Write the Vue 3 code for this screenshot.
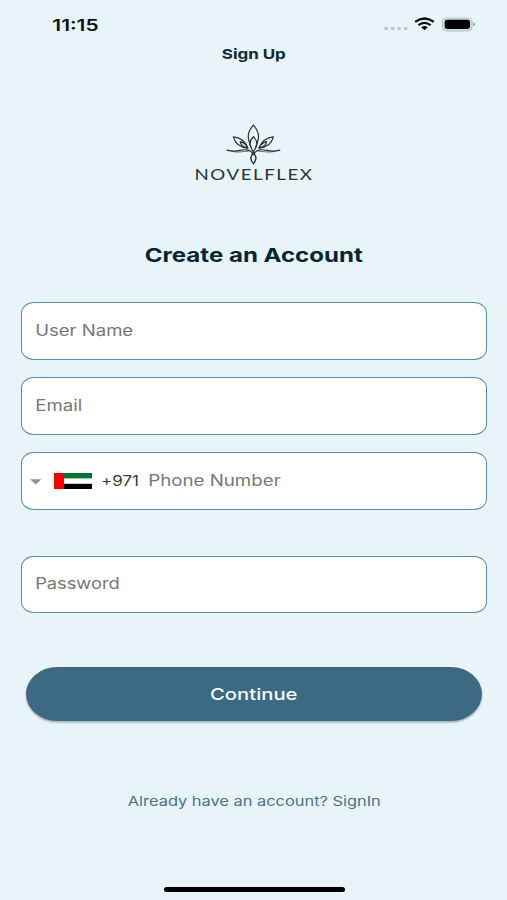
<script setup>
const fields = [
  { id: 'name', label: 'User Name', width: 98 },
  { id: 'email', label: 'Email', width: 47 },
  { id: 'phone', label: 'Phone Number', width: 132.5, phone: true },
  { id: 'password', label: 'Password', width: 84.5 },
]
</script>

<template>
  <main class="screen">
    <header class="status">
      <svg class="time" width="50" height="24" viewBox="0 0 50 24">
        <text x="0.3" y="18.6" textLength="46.3" lengthAdjust="spacingAndGlyphs">11:15</text>
      </svg>
      <svg class="indicators" width="94" height="18" viewBox="0 0 94 18">
        <g fill="#bcc6c9">
          <rect x="1.2" y="12.1" width="4" height="3" rx="1.4" />
          <rect x="7.7" y="12.1" width="4" height="3" rx="1.4" />
          <rect x="14.1" y="12.1" width="4" height="3" rx="1.4" />
          <rect x="20.5" y="12.1" width="4" height="3" rx="1.4" />
        </g>
        <g fill="none" stroke="#080b0c" stroke-width="2.3">
          <path d="M32.2 6.9Q41.5 .2 50.8 6.9" />
          <path d="M35.4 10.2Q41.5 5.6 47.6 10.2" />
        </g>
        <path d="M38.2 12.3Q41.5 9.8 44.8 12.3L41.5 15.3Z" fill="#080b0c" />
        <rect x="59.5" y="3" width="29.5" height="12.8" rx="4" fill="#d3dbdd" stroke="#bdc6c9" stroke-width="1.2" />
        <rect x="61.7" y="4.8" width="25.3" height="9.2" rx="2.4" fill="#000" />
        <path d="M90.3 7.3Q94 9.3 90.3 11.3Z" fill="#929a9d" />
      </svg>
    </header>

    <svg class="title" width="65" height="18" viewBox="0 0 65 18">
      <text x="0.8" y="13.4" textLength="64" lengthAdjust="spacingAndGlyphs">Sign Up</text>
    </svg>

    <svg class="logo" width="120" height="60" viewBox="0 0 120 60">
      <g fill="none" stroke="#26343a" stroke-width="1.2" stroke-linejoin="round" stroke-linecap="round">
        <path d="M59.4 1.2C55.3 5.8 53.4 10.3 54.6 15.5L56.8 23M59.4 1.2C63.5 5.8 65.4 10.3 64.2 15.5L62 23" />
        <path d="M59.4 12.7C54.9 17 54.9 20.8 59.4 28C63.9 20.8 63.9 17 59.4 12.7Z" />
        <path d="M54 24.2C46 23.4 41 19 39.4 12.8C46 13.4 51.3 17.4 54 24.2Z" />
        <path d="M64.8 24.2C72.8 23.4 77.8 19 79.4 12.8C72.8 13.4 67.5 17.4 64.8 24.2Z" />
        <path d="M53.5 23.8C49.2 23 46.6 20.8 46.2 17.6C49.6 18.2 52 20.2 53.5 23.8Z" />
        <path d="M65.3 23.8C69.6 23 72.2 20.8 72.6 17.6C69.2 18.2 66.8 20.2 65.3 23.8Z" />
        <path d="M33 26.1C43 29.2 46 25.1 52.5 25.8C57 26.3 58.3 28.3 59.4 30.6C60.5 28.3 61.8 26.3 66.3 25.8C72.8 25.1 75.8 29.2 85.8 26.1" />
        <path d="M38 27.4C46 29 49 27 54 27.3M80.8 27.4C72.8 29 69.8 27 64.8 27.3" stroke-width=".7" />
        <path d="M59.4 28.3C57 32 55.2 35.2 59.4 39.6C63.6 35.2 61.8 32 59.4 28.3Z" stroke-width="1.5" />
      </g>
      <text x="0.5" y="55.6" textLength="119" lengthAdjust="spacingAndGlyphs">NOVELFLEX</text>
    </svg>

    <svg class="heading" width="219" height="26" viewBox="0 0 219 26">
      <text x="0.8" y="19.7" textLength="218" lengthAdjust="spacingAndGlyphs">Create an Account</text>
    </svg>

    <form class="form">
      <div v-for="field in fields" :key="field.id" class="field" :class="field.id">
        <div v-if="field.phone" class="country">
          <svg class="caret" width="12" height="6" viewBox="0 0 12 6"><path d="M0 .3H11.5L5.7 5.4Z" fill="#909090" /></svg>
          <svg class="flag" width="38" height="16" viewBox="0 0 38 16">
            <rect width="38" height="16" fill="#fff" />
            <rect width="38" height="5.4" fill="#00732f" />
            <rect y="10.8" width="38" height="5.2" fill="#000" />
            <rect width="10" height="16" fill="#f00" />
          </svg>
          <svg class="code" width="39" height="24" viewBox="0 0 39 24">
            <text x="0" y="18.2" textLength="38" lengthAdjust="spacingAndGlyphs">+971</text>
          </svg>
        </div>
        <svg class="label" :width="field.width + 3" height="24">
          <text x="0.2" y="17.9" :textLength="field.width" lengthAdjust="spacingAndGlyphs">{{ field.label }}</text>
        </svg>
      </div>
      <button class="submit" type="button">
        <svg width="88" height="24" viewBox="0 0 88 24">
          <text x="0" y="17.5" textLength="87.5" lengthAdjust="spacingAndGlyphs">Continue</text>
        </svg>
      </button>
    </form>

    <svg class="signin" width="254" height="20" viewBox="0 0 254 20">
      <text x="0.8" y="14.8" textLength="253" lengthAdjust="spacingAndGlyphs">Already have an account? SignIn</text>
    </svg>
    <div class="home"></div>
  </main>
</template>

<style>
body { background: #e8f4f7; }
</style>

<style scoped>
.screen {
  box-sizing: border-box;
  width: 507px;
  height: 900px;
  display: flex;
  flex-direction: column;
  align-items: center;
  background: #e8f4f7;
  font-family: Inter, "Liberation Sans", sans-serif;
  overflow: hidden;
}
svg { display: block; flex: none; overflow: visible; }
.status {
  box-sizing: border-box;
  width: 100%;
  height: 46px;
  padding: 12px 30px 0 52px;
  display: flex;
  justify-content: space-between;
  align-items: flex-start;
}
.indicators { margin-top: 3px; }
.time text { font-size: 16px; font-weight: 600; fill: #0b1519; }
.title text { font-size: 13.2px; font-weight: 650; fill: #0c2937; }
.logo { margin-top: 60px; }
.logo text { font-family: Lato, "Liberation Sans", sans-serif; font-size: 15.6px; letter-spacing: 1.3px; fill: #26343a; }
.heading { margin-top: 58px; }
.heading text { font-size: 19.3px; font-weight: 650; fill: #062532; }
.form { width: 466px; margin-top: 34px; }
.field {
  box-sizing: border-box;
  height: 57.5px;
  margin-bottom: 17.7px;
  padding: 0 13px 2px;
  display: flex;
  align-items: center;
  border: 1px solid #5790a6;
  border-radius: 13px / 11px;
  background: #fff;
}
.phone { padding-left: 8px; margin-bottom: 45.8px; }
.country { display: flex; align-items: center; margin-right: 8.3px; }
.caret { margin: 3px 12px 0 0; }
.flag { margin: 2px 9px 0 0; }
.label text { font-size: 15.3px; fill: #777; }
.code text { font-size: 13.8px; fill: #393939; }
.submit {
  width: 456px;
  height: 54px;
  margin: 54px auto 0;
  padding: 0;
  display: flex;
  align-items: center;
  justify-content: center;
  border: 0;
  border-radius: 31px / 27px;
  background: #3c6a82;
  box-shadow: 0 1.5px 2px rgb(50 70 80 / 40%);
  font-family: inherit;
}
.password { margin-bottom: 0; }
.submit text { font-size: 16.3px; font-weight: 550; fill: #f4fbff; }
.signin { margin-top: 70px; }
.signin text { font-size: 13.3px; fill: #467488; }
.home {
  width: 181px;
  height: 5px;
  margin-top: 76px;
  margin-left: 1px;
  border-radius: 3px;
  background: #000;
}
</style>
